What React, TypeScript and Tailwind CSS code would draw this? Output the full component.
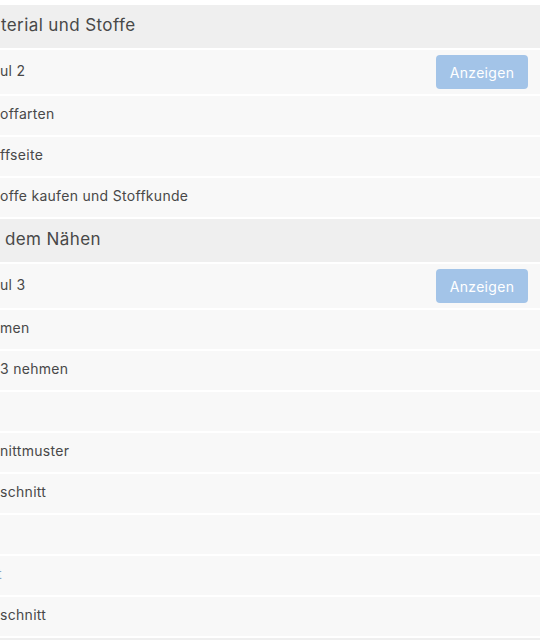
type Row =
  | { kind: "header"; label: string; indent?: string }
  | { kind: "module"; label: string }
  | { kind: "item"; label: string; tone?: "link"; indent?: string };

const rows: Row[] = [
  { kind: "header", label: "terial und Stoffe", indent: "pl-[1px]" },
  { kind: "module", label: "ul 2" },
  { kind: "item", label: "offarten" },
  { kind: "item", label: "ffseite" },
  { kind: "item", label: "offe kaufen und Stoffkunde" },
  { kind: "header", label: "dem Nähen", indent: "pl-[5px]" },
  { kind: "module", label: "ul 3" },
  { kind: "item", label: "men" },
  { kind: "item", label: "3 nehmen" },
  { kind: "item", label: "" },
  { kind: "item", label: "nittmuster" },
  { kind: "item", label: "schnitt" },
  { kind: "item", label: "" },
  { kind: "item", label: "t", tone: "link", indent: "-ml-[3px]" },
  { kind: "item", label: "schnitt" },
  { kind: "header", label: "" },
];

export default function App() {
  return (
    <div
      className="w-[540px] h-[640px] overflow-hidden bg-white pt-[5px]"
      style={{ fontFamily: "Inter, 'Open Sans', sans-serif" }}
    >
      <div className="flex flex-col gap-[2px]">
        {rows.map((row, i) => {
          if (row.kind === "header") {
            return (
              <div key={i} className="h-[43px] bg-[#efefef] flex items-center pb-[1px] shrink-0">
                <h3 className={`text-[17px] text-[#484848] tracking-[0.4px] ${row.indent ?? ""}`}>
                  {row.label}
                </h3>
              </div>
            );
          }
          if (row.kind === "module") {
            return (
              <div key={i} className="h-[44px] bg-[#f8f8f8] flex items-center justify-between pr-[12px] shrink-0">
                <span className="text-[14px] text-[#484848] tracking-[0.3px] pb-[4px]">{row.label}</span>
                <button className="w-[92px] h-[34px] rounded-[4px] bg-[#a3c4e8] text-white text-[14px] tracking-[0.3px]">
                  Anzeigen
                </button>
              </div>
            );
          }
          return (
            <div key={i} className="h-[39px] bg-[#f8f8f8] flex items-center pb-[4px] shrink-0">
              <span
                className={`text-[14px] tracking-[0.3px] ${row.tone === "link" ? "text-[#8aa6c4]" : "text-[#484848]"} ${row.indent ?? ""}`}
              >
                {row.label}
              </span>
            </div>
          );
        })}
      </div>
    </div>
  );
}
